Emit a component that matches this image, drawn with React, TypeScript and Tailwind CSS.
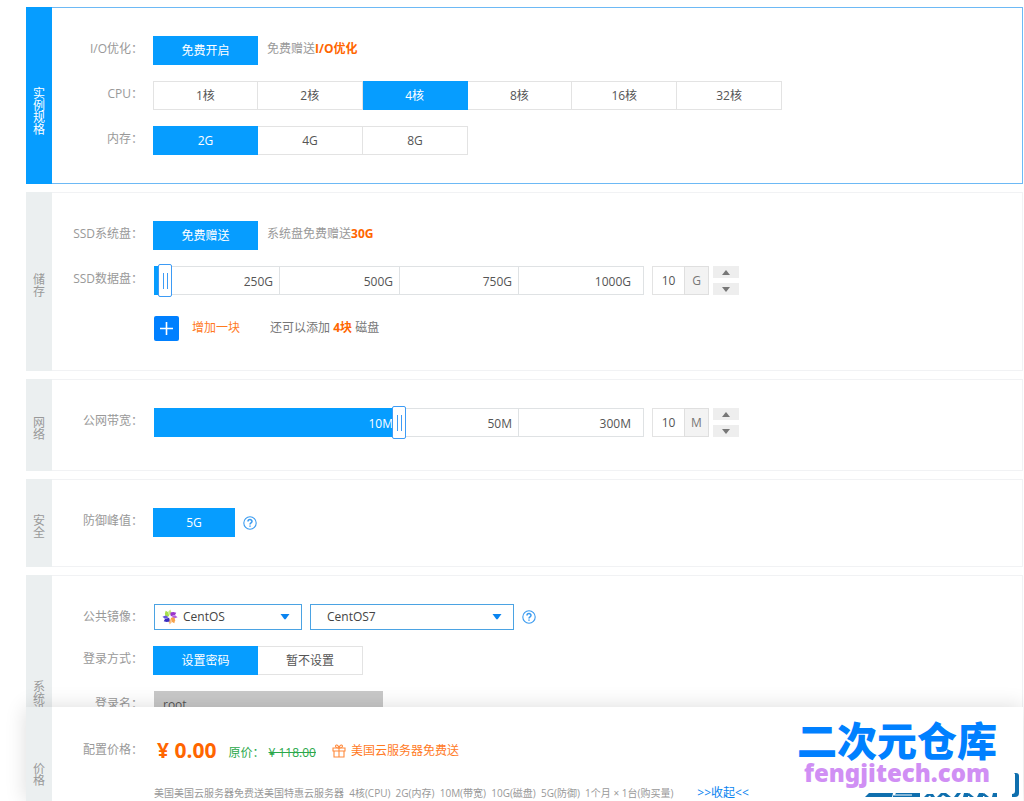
import { useState, type ReactNode } from "react";

function Section({
  title,
  active = false,
  className = "",
  children,
}: {
  title: string;
  active?: boolean;
  className?: string;
  children: ReactNode;
}) {
  return (
    <section
      aria-label={title}
      className={`flex shrink-0 border ${active ? "border-[#6db9f5]" : "border-[#f1f2f4]"} ${className}`}
    >
      <h2
        className={`-my-px -ml-px flex w-[26px] shrink-0 items-center justify-center text-xs leading-3 ${
          active ? "bg-[#069dff] pt-8 text-white" : "bg-[#ebeff0] pt-2 text-[#999]"
        }`}
      >
        <span className="w-3 break-all">{title}</span>
      </h2>
      <div className="flex min-w-0 flex-1 flex-col gap-4 py-7">{children}</div>
    </section>
  );
}

function Row({ label, htmlFor, children }: { label?: string; htmlFor?: string; children: ReactNode }) {
  return (
    <div className="flex items-start gap-[10px]">
      {htmlFor ? (
        <label htmlFor={htmlFor} className="w-[91px] shrink-0 text-right leading-[26px] text-[#999]">
          {label}
        </label>
      ) : (
        <span className="w-[91px] shrink-0 text-right leading-[26px] text-[#999]">{label}</span>
      )}
      {children}
    </div>
  );
}

function Options({
  items,
  initial,
  className,
}: {
  items: string[];
  initial: string;
  className: string;
}) {
  const [value, setValue] = useState(initial);
  return (
    <div className={`grid ${className}`}>
      {items.map((item, i) => (
        <button
          key={item}
          type="button"
          aria-pressed={item === value}
          onClick={() => setValue(item)}
          className={`h-[29px] border-y border-r ${i === 0 ? "border-l" : ""} ${
            item === value
              ? "border-[#069dff] bg-[#069dff] text-white"
              : "border-[#e3e3e3] bg-white text-[#555]"
          }`}
        >
          {item}
        </button>
      ))}
    </div>
  );
}

type Stop = { value: number; at: number };

function positionOf(value: number, stops: Stop[]) {
  for (let i = 1; i < stops.length; i++) {
    const a = stops[i - 1];
    const b = stops[i];
    if (value <= b.value) {
      return a.at + ((value - a.value) / (b.value - a.value)) * (b.at - a.at);
    }
  }
  return stops[stops.length - 1].at;
}

function Amount({
  id,
  name,
  unit,
  max,
  stops,
  segments,
}: {
  id: string;
  name: string;
  unit: string;
  max: number;
  stops: Stop[];
  segments: { text: string; width: string }[];
}) {
  const [value, setValue] = useState(10);
  const change = (n: number) => setValue(Math.min(max, Math.max(1, n || 1)));
  const left = positionOf(value, stops);
  return (
    <div className="ml-px flex h-[29px]">
      <div className="relative flex w-[490px] border-y border-[#dfe2e4]">
        <span className="absolute -inset-y-px left-0 bg-[#069dff]" style={{ width: left + 2 }} />
        {segments.map((s, i) => (
          <span
            key={s.text}
            className={`relative border-r border-[#dfe2e4] text-right leading-[29px] ${s.width} ${
              i === segments.length - 1 ? "pr-3" : "pr-1.5"
            } ${positionOf(parseInt(s.text), stops) <= left ? "border-transparent text-white" : "text-[#555]"}`}
          >
            {s.text}
          </span>
        ))}
        <span
          className="absolute -top-[3px] flex h-[33px] w-[14px] items-center justify-center gap-[3px] rounded-xs border border-[#3d9bf5] bg-white"
          style={{ left }}
        >
          <span className="h-4 w-px bg-[#3d9bf5]" />
          <span className="h-4 w-px bg-[#3d9bf5]" />
        </span>
        <input
          id={id}
          type="range"
          min={1}
          max={max}
          value={value}
          onChange={(e) => change(Number(e.target.value))}
          className="absolute inset-0 h-full w-full cursor-pointer opacity-0"
        />
      </div>
      <input
        type="text"
        aria-label={`${name} ${unit}`}
        value={value}
        onChange={(e) => change(parseInt(e.target.value))}
        className="ml-2 w-8 border border-r-0 border-[#e3e3e3] text-center text-[#555] outline-none"
      />
      <span className="w-[25px] border border-[#dfdfdf] bg-[#f3f3f3] text-center leading-7 text-[#777]">
        {unit}
      </span>
      <div className="ml-1 flex flex-col justify-between">
        <button
          type="button"
          aria-label={`${name} +`}
          onClick={() => change(value + 1)}
          className="flex h-3 w-[26px] items-center justify-center bg-[#eee]"
        >
          <svg width="8" height="5" viewBox="0 0 8 5">
            <path d="M4 0L8 5H0Z" fill="#777" />
          </svg>
        </button>
        <button
          type="button"
          aria-label={`${name} -`}
          onClick={() => change(value - 1)}
          className="flex h-3 w-[26px] items-center justify-center bg-[#eee]"
        >
          <svg width="8" height="5" viewBox="0 0 8 5">
            <path d="M0 0H8L4 5Z" fill="#777" />
          </svg>
        </button>
      </div>
    </div>
  );
}

function HelpIcon() {
  return (
    <svg width="14" height="14" viewBox="0 0 14 14" fill="none" stroke="#3a9bf0">
      <circle cx="7" cy="7" r="6.2" strokeWidth="1.1" />
      <path d="M5 5.5C5 3 9 3 9 5.4C9 6.8 7 6.8 7 8.4" strokeWidth="1.5" />
      <path d="M7 9.4V10.8" strokeWidth="1.5" />
    </svg>
  );
}

function CentosLogo() {
  const petals = [
    { turn: 0, a: "#a6e04a", b: "#c4ec80" },
    { turn: 90, a: "#9a35cc", b: "#b45fe0" },
    { turn: 180, a: "#f7a24a", b: "#fabf80" },
    { turn: 270, a: "#3a2cc0", b: "#6456dc" },
  ];
  return (
    <svg width="16" height="16" viewBox="0 0 16 16">
      {petals.map((p) => (
        <g key={p.turn} transform={`rotate(${p.turn - 30} 8 8)`}>
          <path d="M7.6 7.2L4.4 5.4L5.2 2.6L7.4 0.4L9 3Z" fill={p.a} />
          <path d="M8.4 7L9 2.6L12 1.6L11.6 5Z" fill={p.b} />
        </g>
      ))}
      <path d="M8 6V10M6 8H10" stroke="#fff" strokeWidth="0.8" />
    </svg>
  );
}

function Caret() {
  return (
    <svg
      className="pointer-events-none absolute top-1/2 right-3 -translate-y-1/2"
      width="10"
      height="6"
      viewBox="0 0 10 6"
    >
      <path d="M0.5 0H9.5L5.8 5Q5 5.8 4.2 5Z" fill="#0a84f0" />
    </svg>
  );
}

function GiftIcon() {
  return (
    <svg width="14" height="14" viewBox="0 0 14 14" fill="none" stroke="#ff8a3c" strokeWidth="1.1">
      <path d="M1 4H13V7H1ZM2 7V13H12V7M7 4V13" />
      <path d="M7 4C4.5 4 3.2 3 3.6 1.8C4.2 0.2 6.6 1 7 4C7.4 1 9.8 0.2 10.4 1.8C10.8 3 9.5 4 7 4Z" />
    </svg>
  );
}

function PartnerMark() {
  return (
    <svg width="156" height="28" viewBox="0 0 156 28" fill="#0f6fae">
      <path d="M4 20H28L27 24H0Z" />
      <path d="M31 20H55V24H28V22.6H47V21.4H30Z" />
      <path d="M59 24L62 21H68L70 24H66L65 22.6L63 24ZM72 24L76 20H81L86 24H81L78 22L76 24Z" />
      <path d="M89 24L92 20H96L93 24ZM99 20H103V24H98ZM104 20L109 24H105L102 21ZM114 20H118V24H112ZM119 20L124 24H120L117 21ZM128 20H132V24H127Z" />
      <path d="M149 0H151Q154 0 154 3V20Q154 24 150 24H147V21Q150 21 150 18V1Z" />
    </svg>
  );
}

export default function App() {
  const [disks, setDisks] = useState(4);
  return (
    <div className="relative flex h-screen flex-col overflow-hidden bg-white pr-px pl-[26px] font-['Open_Sans','Noto_Sans_CJK_SC',sans-serif] text-xs">
      <main className="flex min-h-0 flex-1 flex-col gap-2 pt-[7px]">
        <Section title="实例规格" active>
          <Row label="I/O优化：">
            <Options items={["免费开启"]} initial="免费开启" className="w-[105px]" />
            <p className="-ml-px leading-[26px] text-[#999]">
              免费赠送<b className="text-[#ff6600]">I/O优化</b>
            </p>
          </Row>
          <Row label="CPU：">
            <Options
              items={["1核", "2核", "4核", "8核", "16核", "32核"]}
              initial="4核"
              className="w-[629px] grid-cols-6"
            />
          </Row>
          <Row label="内存：">
            <Options items={["2G", "4G", "8G"]} initial="2G" className="w-[315px] grid-cols-3" />
          </Row>
        </Section>

        <Section title="储存">
          <Row label="SSD系统盘：">
            <Options items={["免费赠送"]} initial="免费赠送" className="w-[105px]" />
            <p className="-ml-px leading-[26px] text-[#999]">
              系统盘免费赠送<b className="text-[#ff6600]">30G</b>
            </p>
          </Row>
          <Row label="SSD数据盘：" htmlFor="disk">
            <Amount
              id="disk"
              name="SSD数据盘"
              unit="G"
              max={1000}
              stops={[
                { value: 1, at: 0 },
                { value: 10, at: 4 },
                { value: 250, at: 119 },
                { value: 500, at: 238 },
                { value: 750, at: 357 },
                { value: 1000, at: 476 },
              ]}
              segments={[
                { text: "250G", width: "w-[126px]" },
                { text: "500G", width: "w-[120px]" },
                { text: "750G", width: "w-[119px]" },
                { text: "1000G", width: "w-[125px]" },
              ]}
            />
          </Row>
          <Row>
            <div className="mt-1 mb-px ml-px flex h-[26px] items-center">
              <button
                type="button"
                onClick={() => setDisks(Math.max(0, disks - 1))}
                className="flex items-center gap-[13px] text-[#ff7a1f]"
              >
                <span className="flex size-[25px] items-center justify-center rounded-xs bg-[#0080ff]">
                  <svg width="13" height="13" viewBox="0 0 13 13">
                    <path d="M6.5 0V13M0 6.5H13" stroke="#fff" strokeWidth="1.6" />
                  </svg>
                </span>
                增加一块
              </button>
              <p className="ml-[30px] text-[#777]">
                还可以添加 <b className="text-[#ff6600]">{disks}块</b> 磁盘
              </p>
            </div>
          </Row>
        </Section>

        <Section title="网络" className="min-h-[92px]">
          <Row label="公网带宽：" htmlFor="bandwidth">
            <Amount
              id="bandwidth"
              name="公网带宽"
              unit="M"
              max={300}
              stops={[
                { value: 1, at: 0 },
                { value: 10, at: 238 },
                { value: 50, at: 357 },
                { value: 300, at: 476 },
              ]}
              segments={[
                { text: "10M", width: "w-[246px]" },
                { text: "50M", width: "w-[119px]" },
                { text: "300M", width: "w-[125px]" },
              ]}
            />
          </Row>
        </Section>

        <Section title="安全" className="min-h-[88px]">
          <Row label="防御峰值：">
            <div className="flex items-center gap-2">
              <Options items={["5G"]} initial="5G" className="w-[82px]" />
              <button type="button" aria-label="防御峰值">
                <HelpIcon />
              </button>
            </div>
          </Row>
        </Section>

        <Section title="系统设置" className="min-h-[252px]">
          <Row label="公共镜像：" htmlFor="image">
            <div className="ml-px flex items-center gap-2">
              <div className="relative">
                <span className="pointer-events-none absolute top-[5px] left-2">
                  <CentosLogo />
                </span>
                <select
                  id="image"
                  className="block h-[26px] w-[148px] appearance-none border border-[#4ba3e3] pl-7 text-[#444] outline-none"
                >
                  <option>CentOS</option>
                </select>
                <Caret />
              </div>
              <div className="relative">
                <select
                  aria-label="CentOS"
                  className="block h-[26px] w-[204px] appearance-none border border-[#4ba3e3] pl-4 text-[#444] outline-none"
                >
                  <option>CentOS7</option>
                </select>
                <Caret />
              </div>
              <button type="button" aria-label="公共镜像">
                <HelpIcon />
              </button>
            </div>
          </Row>
          <Row label="登录方式：">
            <Options
              items={["设置密码", "暂不设置"]}
              initial="设置密码"
              className="w-[210px] grid-cols-2"
            />
          </Row>
          <Row label="登录名：" htmlFor="login">
            <input
              id="login"
              type="text"
              readOnly
              value="root"
              className="ml-px h-[26px] w-[229px] bg-[#c8c8c8] px-[9px] text-[#555] outline-none"
            />
          </Row>
        </Section>
      </main>

      <footer className="relative flex h-[94px] shrink-0 bg-white shadow-[0_0_20px_rgba(0,0,0,0.14)]">
        <h2 className="flex w-[26px] shrink-0 justify-center bg-[#ebeff0] pt-14 leading-3 text-[#999]">
          <span className="w-3 break-all">价格</span>
        </h2>
        <div className="flex flex-col pt-[30px]">
          <Row label="配置价格：">
            <div className="ml-1 flex h-[26px] items-center">
              <strong className="text-[21px] text-[#ff6600]">¥ 0.00</strong>
              <span className="ml-3 pt-1.5 text-[#2aa84a]">原价：</span>
              <s className="ml-1 pt-1.5 text-[#2aa84a]">¥ 118.00</s>
              <span className="ml-4 flex items-center gap-[5px] pt-0.5 text-[#ff7a1f]">
                <GiftIcon />
                美国云服务器免费送
              </span>
            </div>
          </Row>
          <div className="mt-[22px] ml-[102px] flex items-center gap-6">
            <p className="text-[10px] leading-4 whitespace-pre text-[#999]">
              美国美国云服务器免费送美国特惠云服务器  4核(CPU)  2G(内存)  10M(带宽)  10G(磁盘)  5G(防御)  1个月 × 1台(购买量)
            </p>
            <button type="button" className="leading-4 text-[#0a84f0]">
              &gt;&gt;收起&lt;&lt;
            </button>
          </div>
        </div>
        <div className="pointer-events-none absolute right-0.5 bottom-0">
          <PartnerMark />
        </div>
        <div className="pointer-events-none absolute top-2.5 right-[26px] flex flex-col items-center font-black">
          <span className="text-[40px] leading-[48px] text-[#0080ff]">二次元仓库</span>
          <span className="font-['Noto_Sans'] text-2xl leading-4 text-[#d08ff4]">fengjitech.com</span>
        </div>
      </footer>
    </div>
  );
}
